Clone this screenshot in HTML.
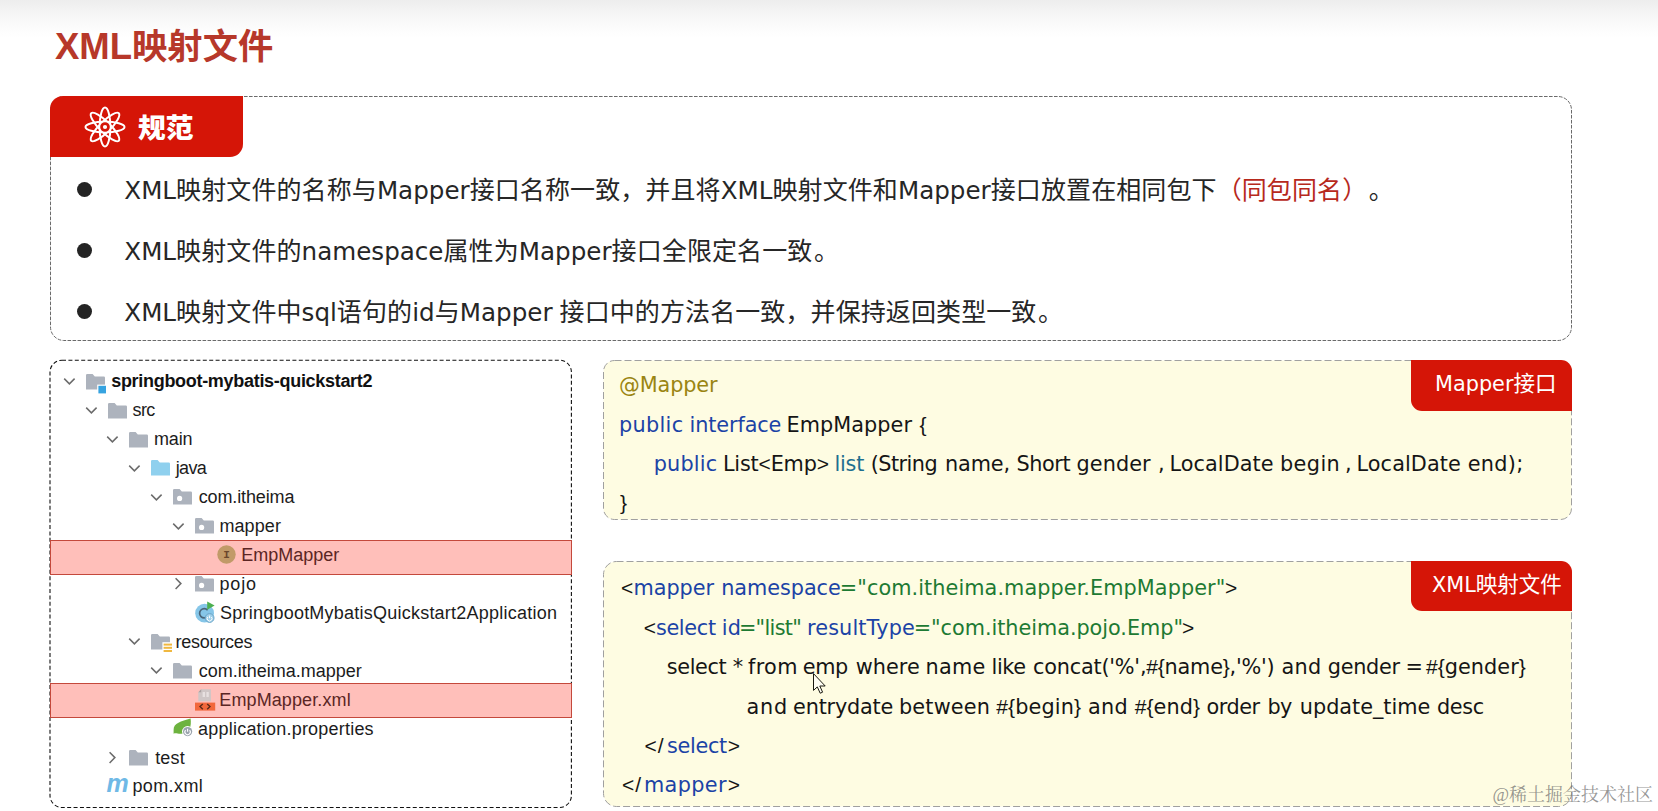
<!DOCTYPE html>
<html lang="zh-CN">
<head>
<meta charset="utf-8">
<title>XML映射文件</title>
<style>
html,body{margin:0;padding:0;}
body{width:1658px;height:811px;overflow:hidden;background:#fff;position:relative;
 font-family:"Liberation Sans","Noto Sans CJK SC",sans-serif;color:#222;text-spacing-trim:space-all;}
.abs{position:absolute;}
.topbar{left:0;top:0;width:1658px;height:38px;background:linear-gradient(#ededed,#f5f5f5 35%,#fcfcfc 75%,#fff);}
.title{left:55px;top:22.8px;font-size:35.3px;line-height:48px;font-weight:bold;color:#b7382a;white-space:nowrap;}
.badge{left:50px;top:96px;width:193px;height:61px;background:#d51507;border-radius:13px 0 13px 0;}
.badge .t{left:88px;top:14.5px;font-size:27.7px;line-height:36px;font-weight:900;color:#fff;white-space:nowrap;}
.dot{width:15px;height:15px;border-radius:50%;background:#242424;}
.li{left:124.3px;font-size:25px;line-height:40px;white-space:nowrap;color:#262626;letter-spacing:0.1px;}
.li .l,.tag .l{font-family:"DejaVu Sans","Liberation Sans",sans-serif;font-size:24.6px;letter-spacing:0;}
.tag .l{font-size:20.8px;}
.red{color:#b7291c;}
.li .e{margin-left:1.6px;}

/* tree */
.row{height:29px;line-height:29px;font-size:18px;color:#1c1c1c;white-space:nowrap;}
.row.b{font-weight:bold;color:#111;}
.row.hlt{color:#5b2624;}
.hl{left:50px;width:520px;height:33px;background:#ffbfba;border:1px solid #c4493c;}
.mvn{font-size:25px;line-height:29px;font-weight:bold;font-style:italic;color:#6fb9e6;letter-spacing:-1px;}

/* code */
.cl{font-family:"DejaVu Sans","Liberation Sans",sans-serif;font-size:20.8px;line-height:39px;height:39px;white-space:pre;color:#151515;}
.cl .p{font-family:"Liberation Sans",sans-serif;font-size:21px;line-height:0;}
.kw{color:#1b43a6;}
.an{color:#9a8512;}
.fn{color:#1f6f8f;}
.st{color:#1d7a33;}
.tag{left:1411px;width:161px;height:51px;background:#d51507;border-radius:0 11px 0 11px;color:#fff;font-size:21.5px;line-height:51px;white-space:nowrap;}
.wm{left:1492.5px;top:781.5px;font-family:"Liberation Serif","Noto Serif CJK SC",serif;font-size:18px;line-height:26px;color:rgba(110,110,110,.72);white-space:nowrap;}
</style>
</head>
<body>
<div class="abs topbar"></div>
<div class="abs title"><span style="font-size:36.5px">XML</span>映射文件</div>
<svg class="abs" style="left:0;top:0" width="1658" height="811" viewBox="0 0 1658 811" fill="none">
<rect x="50.5" y="96.5" width="1521" height="244" rx="13.5" stroke="#6a6a6a" stroke-width="1" stroke-dasharray="3.6 1.4"/>
<rect x="603.5" y="360.5" width="968" height="159" rx="11" fill="#fefce2" stroke="#a0a0a0" stroke-width="1" stroke-dasharray="7 3"/>
<rect x="603.5" y="561.5" width="968" height="245" rx="13" fill="#fefce2" stroke="#a0a0a0" stroke-width="1" stroke-dasharray="7 3"/>
</svg>
<div class="abs badge">
<svg class="abs" style="left:32px;top:7.5px" width="46" height="46" viewBox="-23 -23 46 46" fill="none" stroke="#fff" stroke-width="2">
<ellipse rx="5.4" ry="19.5"/><ellipse rx="5.4" ry="19.5" transform="rotate(45)"/><ellipse rx="5.4" ry="19.5" transform="rotate(90)"/><ellipse rx="5.4" ry="19.5" transform="rotate(135)"/>
<circle r="5.6" fill="#d51507" stroke-width="1.6"/><circle r="2.1" fill="#fff" stroke="none"/>
</svg>
<div class="abs t">规范</div></div>
<div class="abs dot" style="left:77px;top:182px"></div>
<div class="abs dot" style="left:77px;top:243px"></div>
<div class="abs dot" style="left:77px;top:304px"></div>
<div class="abs li" style="top:170px"><span class="l">XML</span>映射文件的名称与<span class="l">Mapper</span>接口名称一致，并且将<span class="l">XML</span>映射文件和<span class="l">Mapper</span>接口放置在相同包下<span class="red">（同包同名）</span><span class="e">。</span></div>
<div class="abs li" style="top:231px"><span class="l">XML</span>映射文件的<span class="l">namespace</span>属性为<span class="l">Mapper</span>接口全限定名一致<span class="e">。</span></div>
<div class="abs li" style="top:292px"><span class="l">XML</span>映射文件中<span class="l">sql</span>语句的<span class="l">id</span>与<span class="l">Mapper</span> 接口中的方法名一致，并保持返回类型一致<span class="e">。</span></div>

<!-- TREE -->
<svg class="abs" style="left:0;top:0" width="1658" height="811" viewBox="0 0 1658 811" fill="none">
<rect x="50" y="360.2" width="521.4" height="447.3" rx="12" stroke="#111" stroke-width="1.1" stroke-dasharray="4 2.4"/>
</svg>
<div class="abs hl" style="top:540px"></div>
<div class="abs hl" style="top:683px"></div>
<svg class="abs" style="left:63.4px;top:377.0px" width="13" height="9" viewBox="0 0 13 9"><path d="M1.2,1.6 L6.4,6.9 L11.6,1.6" fill="none" stroke="#6b6b6b" stroke-width="1.5"/></svg>
<svg class="abs" style="left:86.2px;top:373.6px" width="22" height="20" viewBox="0 0 22 20"><path d="M0,1.2 Q0,0 1.2,0 H6.6 L8.8,2.6 H17.8 Q19,2.6 19,3.8 V15.5 H0 Z" fill="#adb3bd"/><rect x="11.2" y="10.6" width="9.4" height="9.4" fill="#fff"/><rect x="12.4" y="11.8" width="7.6" height="7.6" fill="#36a3e0"/></svg>
<svg class="abs" style="left:84.7px;top:405.9px" width="13" height="9" viewBox="0 0 13 9"><path d="M1.2,1.6 L6.4,6.9 L11.6,1.6" fill="none" stroke="#6b6b6b" stroke-width="1.5"/></svg>
<svg class="abs" style="left:107.7px;top:402.5px" width="22" height="20" viewBox="0 0 22 20"><path d="M0,1.2 Q0,0 1.2,0 H6.6 L8.8,2.6 H17.8 Q19,2.6 19,3.8 V15.5 H0 Z" fill="#adb3bd"/></svg>
<svg class="abs" style="left:106.2px;top:434.9px" width="13" height="9" viewBox="0 0 13 9"><path d="M1.2,1.6 L6.4,6.9 L11.6,1.6" fill="none" stroke="#6b6b6b" stroke-width="1.5"/></svg>
<svg class="abs" style="left:129.3px;top:431.5px" width="22" height="20" viewBox="0 0 22 20"><path d="M0,1.2 Q0,0 1.2,0 H6.6 L8.8,2.6 H17.8 Q19,2.6 19,3.8 V15.5 H0 Z" fill="#adb3bd"/></svg>
<svg class="abs" style="left:128.4px;top:463.8px" width="13" height="9" viewBox="0 0 13 9"><path d="M1.2,1.6 L6.4,6.9 L11.6,1.6" fill="none" stroke="#6b6b6b" stroke-width="1.5"/></svg>
<svg class="abs" style="left:151.0px;top:460.4px" width="22" height="20" viewBox="0 0 22 20"><path d="M0,1.2 Q0,0 1.2,0 H6.6 L8.8,2.6 H17.8 Q19,2.6 19,3.8 V15.5 H0 Z" fill="#8fd0ee"/></svg>
<svg class="abs" style="left:149.5px;top:492.7px" width="13" height="9" viewBox="0 0 13 9"><path d="M1.2,1.6 L6.4,6.9 L11.6,1.6" fill="none" stroke="#6b6b6b" stroke-width="1.5"/></svg>
<svg class="abs" style="left:172.7px;top:489.3px" width="22" height="20" viewBox="0 0 22 20"><path d="M0,1.2 Q0,0 1.2,0 H6.6 L8.8,2.6 H17.8 Q19,2.6 19,3.8 V15.5 H0 Z" fill="#adb3bd"/><circle cx="6.6" cy="9.4" r="2.6" fill="#fff"/></svg>
<svg class="abs" style="left:171.7px;top:521.6px" width="13" height="9" viewBox="0 0 13 9"><path d="M1.2,1.6 L6.4,6.9 L11.6,1.6" fill="none" stroke="#6b6b6b" stroke-width="1.5"/></svg>
<svg class="abs" style="left:194.5px;top:518.2px" width="22" height="20" viewBox="0 0 22 20"><path d="M0,1.2 Q0,0 1.2,0 H6.6 L8.8,2.6 H17.8 Q19,2.6 19,3.8 V15.5 H0 Z" fill="#adb3bd"/><circle cx="6.6" cy="9.4" r="2.6" fill="#fff"/></svg>
<svg class="abs" style="left:216.5px;top:545.3px" width="19" height="19" viewBox="0 0 19 19"><circle cx="9.5" cy="9.5" r="9.2" fill="#c19a68"/><text x="9.5" y="13.4" text-anchor="middle" font-family="Liberation Mono, monospace" font-weight="bold" font-size="11" fill="#6a472c">I</text></svg>
<svg class="abs" style="left:174.0px;top:577.1px" width="9" height="14" viewBox="0 0 9 14"><path d="M1.6,1.2 L6.9,6.6 L1.6,12" fill="none" stroke="#6b6b6b" stroke-width="1.5"/></svg>
<svg class="abs" style="left:195.0px;top:576.1px" width="22" height="20" viewBox="0 0 22 20"><path d="M0,1.2 Q0,0 1.2,0 H6.6 L8.8,2.6 H17.8 Q19,2.6 19,3.8 V15.5 H0 Z" fill="#adb3bd"/><circle cx="6.6" cy="9.4" r="2.6" fill="#fff"/></svg>
<svg class="abs" style="left:195.0px;top:601.2px" width="21" height="23" viewBox="0 0 21 23"><circle cx="9.6" cy="12.2" r="9.4" fill="#86c6e8"/><path d="M12.6,9.2 A4.6,4.6 0 1 0 12.6,15.4" fill="none" stroke="#4a6478" stroke-width="1.7"/><path d="M12.2,0.6 L19.6,4.6 L12.2,8.8 Z" fill="#4caf50"/><circle cx="14.6" cy="17" r="4.4" fill="#9fd0ea" stroke="#6aa5c8" stroke-width="1"/><path d="M14.6,14.6 V17.2 M12.8,16 A2.4,2.4 0 1 0 16.4,16" fill="none" stroke="#fff" stroke-width="1"/></svg>
<svg class="abs" style="left:128.4px;top:637.4px" width="13" height="9" viewBox="0 0 13 9"><path d="M1.2,1.6 L6.4,6.9 L11.6,1.6" fill="none" stroke="#6b6b6b" stroke-width="1.5"/></svg>
<svg class="abs" style="left:151.2px;top:634.0px" width="22" height="20" viewBox="0 0 22 20"><path d="M0,1.2 Q0,0 1.2,0 H6.6 L8.8,2.6 H17.8 Q19,2.6 19,3.8 V15.5 H0 Z" fill="#adb3bd"/><rect x="11.4" y="8.2" width="9.6" height="11.6" fill="#fff"/><rect x="12.6" y="9.6" width="8.4" height="2" fill="#f0b840"/><rect x="12.6" y="12.8" width="8.4" height="2" fill="#f0b840"/><rect x="12.6" y="16" width="8.4" height="2" fill="#f0b840"/></svg>
<svg class="abs" style="left:149.5px;top:666.3px" width="13" height="9" viewBox="0 0 13 9"><path d="M1.2,1.6 L6.4,6.9 L11.6,1.6" fill="none" stroke="#6b6b6b" stroke-width="1.5"/></svg>
<svg class="abs" style="left:172.7px;top:662.9px" width="22" height="20" viewBox="0 0 22 20"><path d="M0,1.2 Q0,0 1.2,0 H6.6 L8.8,2.6 H17.8 Q19,2.6 19,3.8 V15.5 H0 Z" fill="#adb3bd"/></svg>
<svg class="abs" style="left:195.3px;top:689.0px" width="21" height="22" viewBox="0 0 21 22"><path d="M6.2,0.3 H15.9 V12.3 H3.3 V3.2 Z" fill="#cfc6c6"/><path d="M6.2,0.3 V3.2 H3.3 Z" fill="#a9a0a0"/><path d="M7.6,3 H10 V8 H7.6 Z M11.4,3 H13.8 V8 H11.4 Z" fill="#ece6e6" opacity=".8"/><rect x="0" y="13.6" width="20.2" height="8" fill="#f2683c"/><path d="M7.8,15 L5,17.6 L7.8,20.2 M12.2,15 L15,17.6 L12.2,20.2" fill="none" stroke="#5a2a1a" stroke-width="1.4"/></svg>
<svg class="abs" style="left:173.4px;top:717.8px" width="21" height="20" viewBox="0 0 21 20"><path d="M0.6,12 C0.6,4.5 8,3.6 17.6,0.4 C18.6,8 17,15.4 8.4,15.8 C4.4,16 2.6,14.6 0.6,15.8 Z" fill="#6db33f"/><circle cx="14.6" cy="13.6" r="5.6" fill="#fff"/><circle cx="14.6" cy="13.6" r="4.6" fill="#9aa3ad"/><path d="M14.6,10.8 V13.8 M12.6,12.2 A2.7,2.7 0 1 0 16.6,12.2" fill="none" stroke="#fff" stroke-width="1.1"/></svg>
<svg class="abs" style="left:108.0px;top:750.7px" width="9" height="14" viewBox="0 0 9 14"><path d="M1.6,1.2 L6.9,6.6 L1.6,12" fill="none" stroke="#6b6b6b" stroke-width="1.5"/></svg>
<svg class="abs" style="left:129.3px;top:749.7px" width="22" height="20" viewBox="0 0 22 20"><path d="M0,1.2 Q0,0 1.2,0 H6.6 L8.8,2.6 H17.8 Q19,2.6 19,3.8 V15.5 H0 Z" fill="#adb3bd"/></svg>
<div class="abs mvn" style="left:106.5px;top:769.2px">m</div>
<div class="abs row b" style="left:111.2px;top:367.4px;letter-spacing:-0.30px">springboot-mybatis-quickstart2</div>
<div class="abs row" style="left:132.6px;top:396.3px;letter-spacing:-0.70px">src</div>
<div class="abs row" style="left:154.0px;top:425.3px;letter-spacing:-0.13px">main</div>
<div class="abs row" style="left:175.8px;top:454.2px;letter-spacing:-0.70px">java</div>
<div class="abs row" style="left:198.7px;top:483.1px;letter-spacing:-0.13px">com.itheima</div>
<div class="abs row" style="left:219.4px;top:512.1px;letter-spacing:0.11px">mapper</div>
<div class="abs row hlt" style="left:241.2px;top:541.0px;letter-spacing:-0.01px">EmpMapper</div>
<div class="abs row" style="left:219.4px;top:569.9px;letter-spacing:0.86px">pojo</div>
<div class="abs row" style="left:220.0px;top:598.8px;letter-spacing:0.23px">SpringbootMybatisQuickstart2Application</div>
<div class="abs row" style="left:175.5px;top:627.8px;letter-spacing:-0.24px">resources</div>
<div class="abs row" style="left:198.7px;top:656.7px;letter-spacing:0.00px">com.itheima.mapper</div>
<div class="abs row hlt" style="left:219.3px;top:685.6px;letter-spacing:0.11px">EmpMapper.xml</div>
<div class="abs row" style="left:198.1px;top:714.6px;letter-spacing:0.21px">application.properties</div>
<div class="abs row" style="left:155.2px;top:743.5px;letter-spacing:0.16px">test</div>
<div class="abs row" style="left:132.4px;top:772.4px;letter-spacing:0.40px">pom.xml</div>

<!-- CODE boxes -->
<div class="abs cl an" style="left:619.0px;top:366.0px;letter-spacing:-0.11px">@Mapper</div>
<div class="abs cl kw" style="left:619.0px;top:405.6px;letter-spacing:0.31px">public</div>
<div class="abs cl kw" style="left:689.6px;top:405.6px;letter-spacing:-0.12px">interface</div>
<div class="abs cl" style="left:786.5px;top:405.6px;letter-spacing:0.06px">EmpMapper</div>
<div class="abs cl" style="left:919.5px;top:405.6px;letter-spacing:0.00px"><span class="p">{</span></div>
<div class="abs cl kw" style="left:653.7px;top:444.8px;letter-spacing:0.17px">public</div>
<div class="abs cl" style="left:722.9px;top:444.8px;letter-spacing:-0.18px">List<span class="p">&lt;</span>Emp<span class="p">&gt;</span></div>
<div class="abs cl fn" style="left:834.5px;top:444.8px;letter-spacing:-0.23px">list</div>
<div class="abs cl" style="left:870.8px;top:444.8px;letter-spacing:-0.56px">(String</div>
<div class="abs cl" style="left:945.0px;top:444.8px;letter-spacing:-0.12px">name,</div>
<div class="abs cl" style="left:1016.4px;top:444.8px;letter-spacing:-0.39px">Short</div>
<div class="abs cl" style="left:1076.6px;top:444.8px;letter-spacing:0.05px">gender</div>
<div class="abs cl" style="left:1158.0px;top:444.8px;letter-spacing:0.00px">,</div>
<div class="abs cl" style="left:1169.4px;top:444.8px;letter-spacing:0.07px">LocalDate</div>
<div class="abs cl" style="left:1279.9px;top:444.8px;letter-spacing:0.43px">begin</div>
<div class="abs cl" style="left:1345.0px;top:444.8px;letter-spacing:0.00px">,</div>
<div class="abs cl" style="left:1356.5px;top:444.8px;letter-spacing:0.09px">LocalDate</div>
<div class="abs cl" style="left:1467.7px;top:444.8px;letter-spacing:0.30px">end);</div>
<div class="abs cl" style="left:620.0px;top:484.0px;letter-spacing:0.00px"><span class="p">}</span></div>
<div class="abs cl" style="left:620.9px;top:569.2px;letter-spacing:0.00px"><span class="p">&lt;</span></div>
<div class="abs cl kw" style="left:633.6px;top:569.2px;letter-spacing:-0.08px">mapper</div>
<div class="abs cl kw" style="left:721.2px;top:569.2px;letter-spacing:-0.05px">namespace</div>
<div class="abs cl st" style="left:839.8px;top:569.2px;letter-spacing:0.07px">="com.itheima.mapper.EmpMapper"</div>
<div class="abs cl" style="left:1225.0px;top:569.2px;letter-spacing:0.00px"><span class="p">&gt;</span></div>
<div class="abs cl" style="left:643.7px;top:608.7px;letter-spacing:0.00px"><span class="p">&lt;</span></div>
<div class="abs cl kw" style="left:655.9px;top:608.7px;letter-spacing:-0.33px">select</div>
<div class="abs cl kw" style="left:721.7px;top:608.7px;letter-spacing:0.22px">id</div>
<div class="abs cl st" style="left:738.9px;top:608.7px;letter-spacing:-0.70px">="list"</div>
<div class="abs cl kw" style="left:807.0px;top:608.7px;letter-spacing:0.13px">resultType</div>
<div class="abs cl st" style="left:913.7px;top:608.7px;letter-spacing:-0.04px">="com.itheima.pojo.Emp"</div>
<div class="abs cl" style="left:1182.0px;top:608.7px;letter-spacing:0.00px"><span class="p">&gt;</span></div>
<div class="abs cl" style="left:666.8px;top:648.2px;letter-spacing:-0.39px">select</div>
<div class="abs cl" style="left:732.8px;top:648.2px;letter-spacing:0.00px">*</div>
<div class="abs cl" style="left:748.0px;top:648.2px;letter-spacing:0.35px">from</div>
<div class="abs cl" style="left:802.8px;top:648.2px;letter-spacing:-0.38px">emp</div>
<div class="abs cl" style="left:855.7px;top:648.2px;letter-spacing:0.06px">where</div>
<div class="abs cl" style="left:925.6px;top:648.2px;letter-spacing:0.21px">name</div>
<div class="abs cl" style="left:991.5px;top:648.2px;letter-spacing:-0.39px">like</div>
<div class="abs cl" style="left:1033.0px;top:648.2px;letter-spacing:-0.21px">concat('%',<span class="p">#{</span>name<span class="p">}</span>,'%')</div>
<div class="abs cl" style="left:1281.6px;top:648.2px;letter-spacing:0.24px">and</div>
<div class="abs cl" style="left:1327.8px;top:648.2px;letter-spacing:-0.29px">gender</div>
<div class="abs cl" style="left:1405.5px;top:648.2px;letter-spacing:0.00px">=</div>
<div class="abs cl" style="left:1426.0px;top:648.2px;letter-spacing:0.04px"><span class="p">#{</span>gender<span class="p">}</span></div>
<div class="abs cl" style="left:746.5px;top:687.6px;letter-spacing:0.79px">and</div>
<div class="abs cl" style="left:793.1px;top:687.6px;letter-spacing:-0.22px">entrydate</div>
<div class="abs cl" style="left:899.0px;top:687.6px;letter-spacing:0.16px">between</div>
<div class="abs cl" style="left:996.3px;top:687.6px;letter-spacing:0.12px"><span class="p">#{</span>begin<span class="p">}</span></div>
<div class="abs cl" style="left:1088.0px;top:687.6px;letter-spacing:0.34px">and</div>
<div class="abs cl" style="left:1134.7px;top:687.6px;letter-spacing:0.09px"><span class="p">#{</span>end<span class="p">}</span></div>
<div class="abs cl" style="left:1206.4px;top:687.6px;letter-spacing:-0.43px">order</div>
<div class="abs cl" style="left:1267.6px;top:687.6px;letter-spacing:-0.70px">by</div>
<div class="abs cl" style="left:1299.8px;top:687.6px;letter-spacing:-0.02px">update_time</div>
<div class="abs cl" style="left:1436.9px;top:687.6px;letter-spacing:-0.34px">desc</div>
<div class="abs cl" style="left:644.4px;top:727.2px;letter-spacing:1.10px"><span class="p">&lt;/</span></div>
<div class="abs cl kw" style="left:667.0px;top:727.2px;letter-spacing:-0.33px">select</div>
<div class="abs cl" style="left:727.7px;top:727.2px;letter-spacing:0.00px"><span class="p">&gt;</span></div>
<div class="abs cl" style="left:622.0px;top:766.4px;letter-spacing:1.10px"><span class="p">&lt;/</span></div>
<div class="abs cl kw" style="left:643.9px;top:766.4px;letter-spacing:0.38px">mapper</div>
<div class="abs cl" style="left:727.7px;top:766.4px;letter-spacing:0.00px"><span class="p">&gt;</span></div>
<div class="abs tag" style="top:360px"><span class="abs" style="left:24px;top:-1.1px"><span class="l">Mapper</span>接口</span></div>
<div class="abs tag" style="top:561px;height:50px"><span class="abs" style="left:21px;top:-1.3px"><span class="l">XML</span>映射文件</span></div>

<!-- mouse cursor -->
<svg class="abs" style="left:811.6px;top:672.2px" width="17" height="23" viewBox="0 0 17 23"><path d="M1.5,1.6 V18.4 L5.3,14.9 L8.2,21.2 L10.6,20.2 L7.8,14 H13.2 Z" fill="#fffef4" stroke="#1a1a10" stroke-width="1" stroke-linejoin="round"/></svg>

<div class="abs wm">@稀土掘金技术社区</div>
</body>
</html>
